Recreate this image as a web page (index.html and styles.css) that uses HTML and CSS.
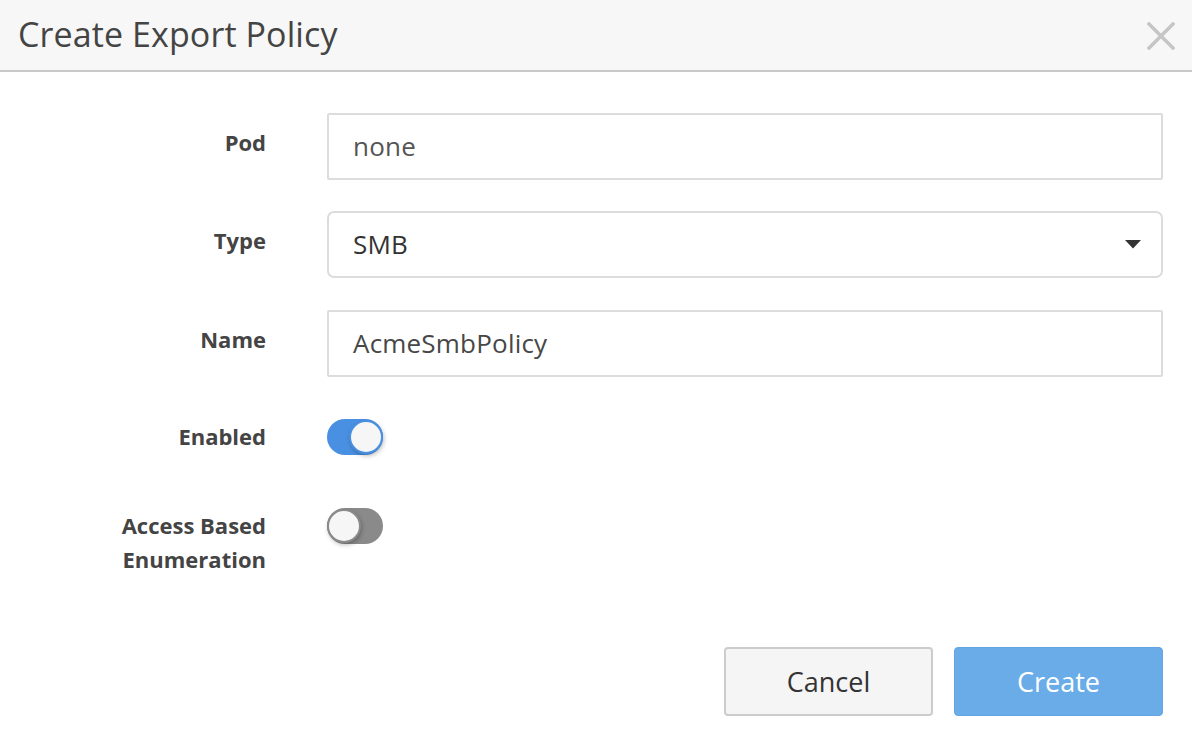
FILE: index.html
```html
<!DOCTYPE html>
<html>
<head>
<meta charset="utf-8">
<link rel="stylesheet" href="styles.css">
</head>
<body>
<div class="modal">
  <div class="modal-header">
    <h1 class="title">Create Export Policy</h1>
    <svg class="close" width="28" height="28" viewBox="0 0 28 28"><path d="M2 2 L26 26 M26 2 L2 26" stroke="#c6c6c6" stroke-width="3.6" stroke-linecap="square" fill="none"/></svg>
  </div>
  <div class="modal-body">
    <div class="row row-input">
      <div class="label">Pod</div>
      <div class="field input square"><span class="val muted">none</span></div>
    </div>
    <div class="row row-input row-type">
      <div class="label">Type</div>
      <div class="field input rounded"><span class="val dark">SMB</span>
        <svg class="caret" width="16" height="9" viewBox="0 0 16 9"><path d="M0 0 H16 L8 8.5 Z" fill="#333"/></svg>
      </div>
    </div>
    <div class="row row-input row-name">
      <div class="label">Name</div>
      <div class="field input square"><span class="val">AcmeSmbPolicy</span></div>
    </div>
    <div class="row row-toggle row-enabled">
      <div class="label">Enabled</div>
      <div class="field"><div class="toggle on"><div class="knob"></div></div></div>
    </div>
    <div class="row row-toggle row-abe">
      <div class="label">Access Based<br>Enumeration</div>
      <div class="field"><div class="toggle off"><div class="knob"></div></div></div>
    </div>
    <div class="actions">
      <button class="btn btn-cancel">Cancel</button>
      <button class="btn btn-create">Create</button>
    </div>
  </div>
</div>
</body>
</html>
```
FILE: styles.css
```css
html, body {
  margin: 0;
  padding: 0;
  background: #ffffff;
}
body {
  font-family: "Open Sans", "Lato", "Liberation Sans", sans-serif;
  color: #444;
}
.modal {
  width: 1192px;
  height: 746px;
  overflow: hidden;
}
.modal-header {
  height: 70px;
  background: #f7f7f7;
  border-bottom: 2px solid #c8c8c8;
  display: flex;
  align-items: center;
  justify-content: space-between;
  padding: 0 16px 0 18px;
}
.title {
  margin: 0;
  font-weight: 400;
  font-size: 34px;
  color: #444;
  letter-spacing: 0.1px;
  position: relative;
  top: -1px;
}
.close {
  display: block;
  margin-right: 1px;
  position: relative;
  top: 1px;
}
.modal-body {
  padding: 41px 29px 0 0;
}
.row {
  display: flex;
  column-gap: 61px;
}
.label {
  width: 266px;
  flex: none;
  text-align: right;
  font-weight: 700;
  font-size: 22px;
  color: #444;
  line-height: 34px;
}
.field {
  flex: 1;
}
.row-input {
  align-items: center;
  margin-bottom: 31px;
}
.row-input .label {
  position: relative;
  top: -5px;
}
.row-type { margin-bottom: 32px; }
.row-name { margin-bottom: 43px; }
.input {
  height: 67px;
  box-sizing: border-box;
  border: 2px solid #dcdcdc;
  display: flex;
  align-items: center;
  justify-content: space-between;
  padding: 0 20px 0 24px;
  background: #fff;
}
.square { border-radius: 2px; }
.rounded { border-radius: 7px; }
.val {
  font-size: 26px;
  color: #474747;
  letter-spacing: 0.2px;
  position: relative;
  top: -1px;
}
.val.muted { color: #555; }
.val.dark { color: #333; }
.caret { display: block; }
.row-toggle {
  align-items: flex-start;
}
.row-toggle .label {
  position: relative;
  top: -1px;
}
.row-enabled {
  margin-bottom: 54px;
}
.toggle {
  width: 56px;
  height: 36px;
  border-radius: 18px;
  position: relative;
  box-sizing: border-box;
}
.row-enabled .toggle { margin-top: -1px; }
.row-abe .toggle { margin-top: -1px; }
.toggle.on { background: #4a90e2; }
.toggle.off { background: #8a8a8a; }
.knob {
  position: absolute;
  top: 1px;
  width: 34px;
  height: 34px;
  border-radius: 50%;
  background: #f6f6f6;
  box-sizing: border-box;
  box-shadow: 1px 2px 4px rgba(0,0,0,0.25);
}
.toggle.on .knob {
  right: 0;
  border: 2px solid #4a90e2;
}
.toggle.off .knob {
  left: 0;
  border: 2px solid #8a8a8a;
}
.actions {
  display: flex;
  justify-content: flex-end;
  column-gap: 21px;
  margin-top: 70px;
}
.btn {
  width: 209px;
  height: 69px;
  box-sizing: border-box;
  border-radius: 4px;
  font-family: inherit;
  font-size: 27px;
  padding: 0;
}
.btn-cancel {
  background: #f5f5f5;
  border: 2px solid #cccccc;
  color: #333;
}
.btn-create {
  background: #6aace8;
  border: 1px solid #62a5e4;
  color: #ffffff;
}
```
